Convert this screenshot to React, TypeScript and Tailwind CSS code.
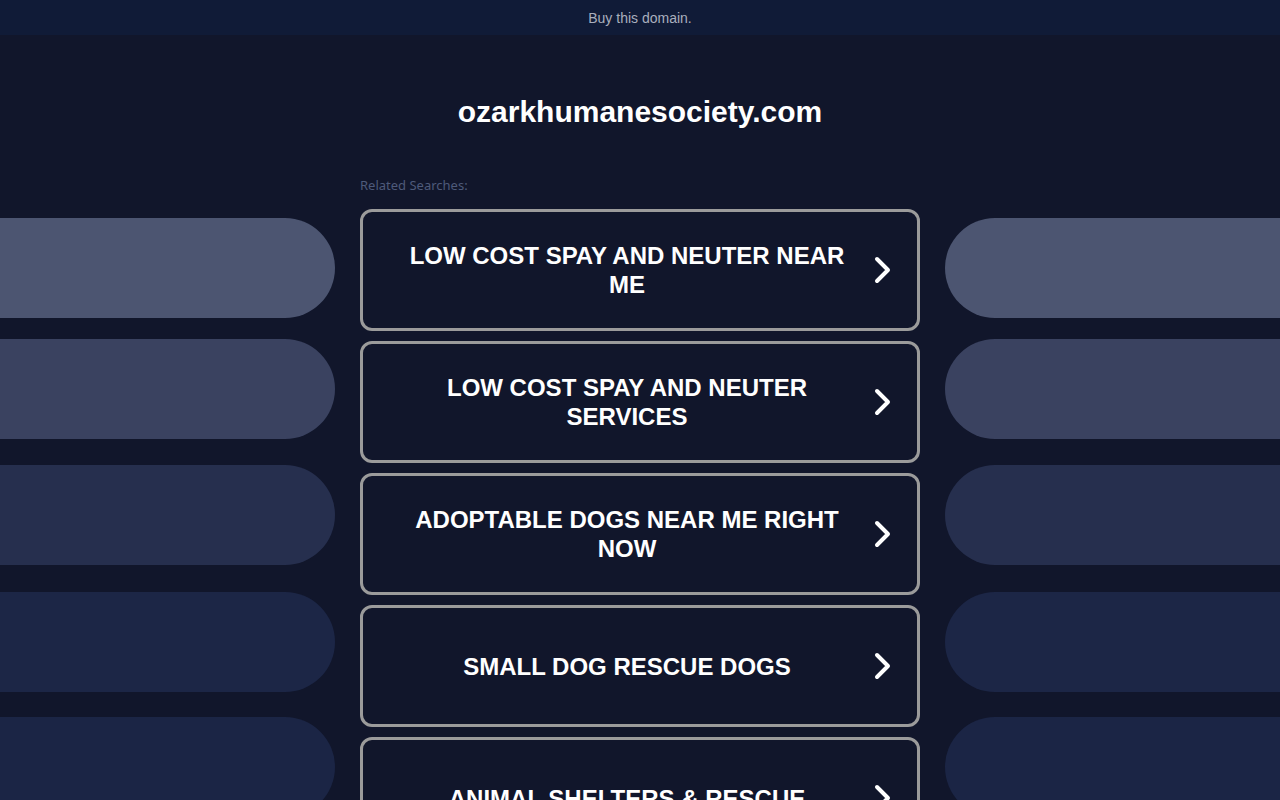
const searches = [
  'LOW COST SPAY AND NEUTER NEAR ME',
  'LOW COST SPAY AND NEUTER SERVICES',
  'ADOPTABLE DOGS NEAR ME RIGHT NOW',
  'SMALL DOG RESCUE DOGS',
  'ANIMAL SHELTERS & RESCUE',
];

// side pills: colour + top margin
const pills = [
  { bg: 'bg-[#4c5571]', mt: 'mt-[9px]' },
  { bg: 'bg-[#3a4260]', mt: 'mt-[21px]' },
  { bg: 'bg-[#262f4e]', mt: 'mt-[26px]' },
  { bg: 'bg-[#1c2646]', mt: 'mt-[27px]' },
  { bg: 'bg-[#1b2545]', mt: 'mt-[25px]' },
];

function Chevron() {
  return (
    <svg width="18" height="28" viewBox="0 0 18 28" fill="none" className="shrink-0">
      <polyline
        points="4,3 15,14 4,25"
        stroke="#ffffff"
        strokeWidth="4"
        strokeLinecap="round"
        strokeLinejoin="round"
      />
    </svg>
  );
}

function SideColumn({ side }: { side: 'left' | 'right' }) {
  return (
    <div className="flex flex-col">
      {pills.map((p, i) => (
        <div
          key={i}
          className={`${p.mt} h-[100px] shrink-0 ${p.bg} ${
            side === 'left' ? 'rounded-r-[50px]' : 'rounded-l-[50px]'
          }`}
        />
      ))}
    </div>
  );
}

export default function App() {
  return (
    <div className="min-h-screen bg-[#11162b] font-['Liberation_Sans',Arial,sans-serif] overflow-hidden">
      {/* top bar */}
      <div className="h-[35px] bg-[#101b37] flex items-center justify-center pt-[2px]">
        <span className="text-[14px] text-[#a9afbd]">Buy this domain.</span>
      </div>

      <h1 className="mt-[60px] text-center text-[30px] leading-[34px] font-bold text-white">
        ozarkhumanesociety.com
      </h1>

      <div className="w-[560px] mx-auto mt-[48px]">
        <p className="text-[13px] leading-[17px] text-[#4e5a7a] font-['Noto_Sans',sans-serif]">
          Related Searches:
        </p>
      </div>

      <div className="mt-[15px] grid grid-cols-[1fr_560px_1fr] gap-x-[25px]">
        <SideColumn side="left" />
        <div className="flex flex-col gap-[10px]">
          {searches.map((s) => (
            <div
              key={s}
              className="h-[122px] border-[3px] border-[#9b9b9b] rounded-[12px] flex items-center pl-[34px] pr-[26px] gap-[16px] cursor-pointer"
            >
              <span className="flex-1 text-center text-[24px] leading-[29px] font-bold text-white">
                {s}
              </span>
              <Chevron />
            </div>
          ))}
        </div>
        <SideColumn side="right" />
      </div>
    </div>
  );
}
